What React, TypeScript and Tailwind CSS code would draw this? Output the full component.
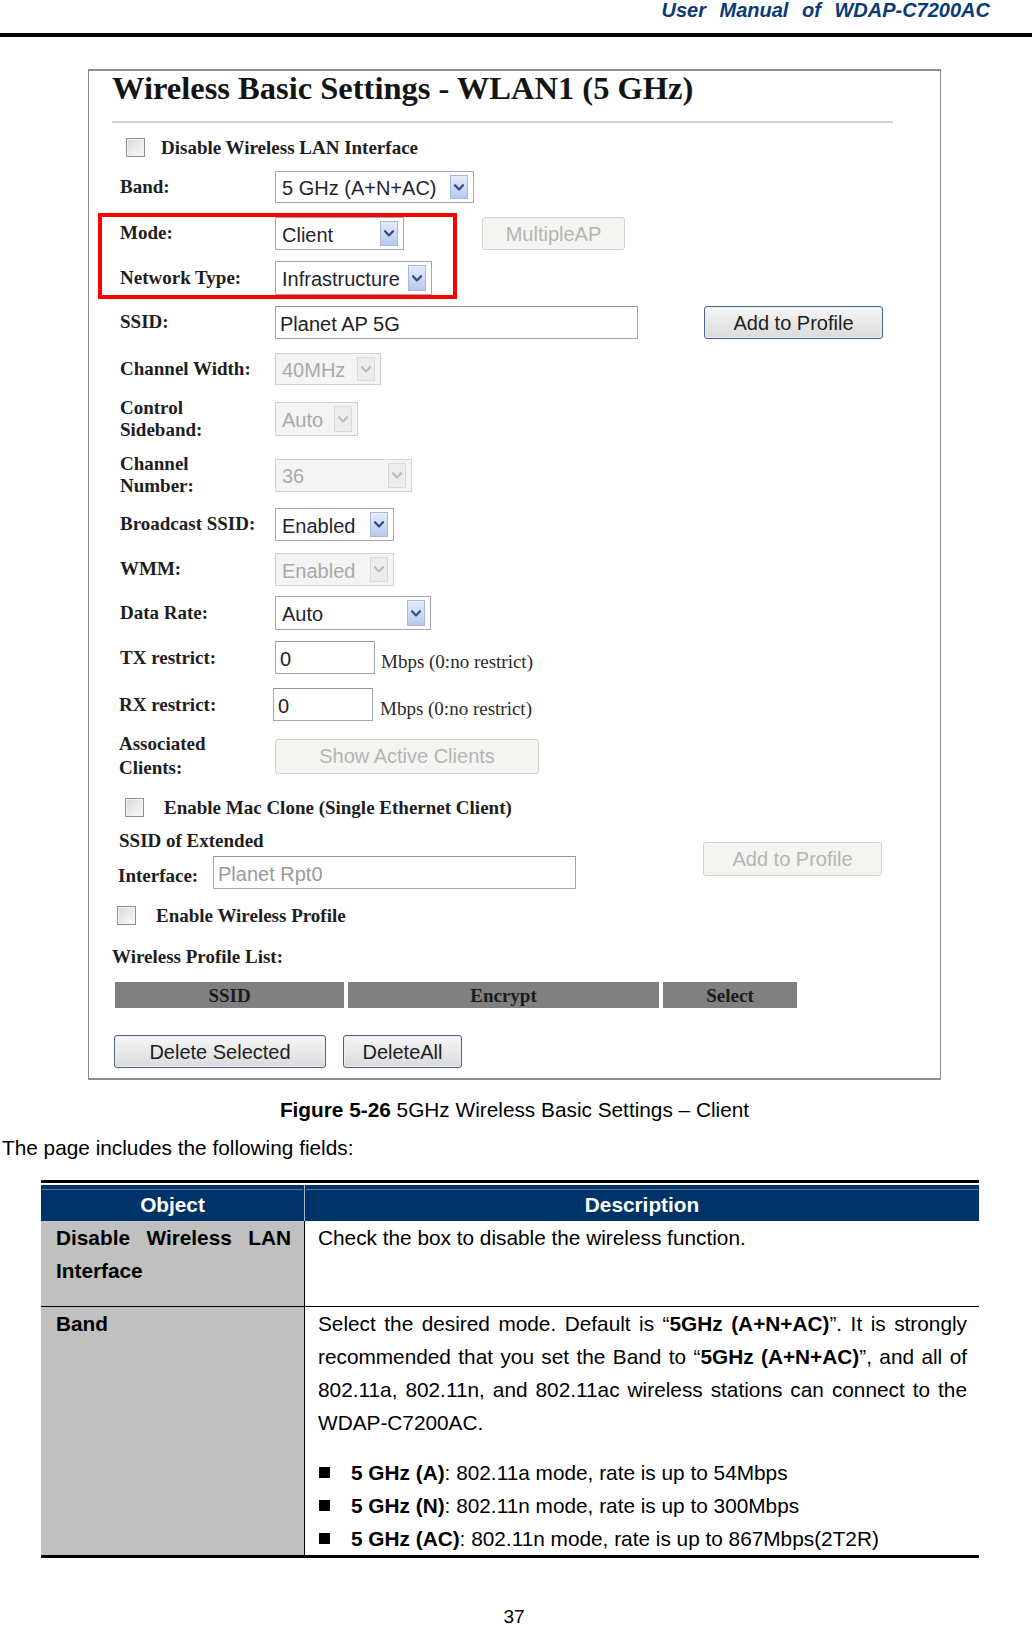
import React from "react";

const serif = "font-['Liberation_Serif','Times_New_Roman',serif]";
const sans = "font-['Liberation_Sans',Arial,sans-serif]";

function Chevron({ color }: { color: string }) {
  return (
    <svg width="10" height="7" viewBox="0 0 10 7">
      <path d="M1 1.2 L5 5.4 L9 1.2" fill="none" stroke={color} strokeWidth="2.2" strokeLinecap="round" strokeLinejoin="round" />
    </svg>
  );
}

function Sel({ className, text, disabled }: { className: string; text: string; disabled?: boolean }) {
  return (
    <div
      className={
        "flex items-stretch border " +
        (disabled ? "border-[#d2d2d2] bg-[#f4f4f4] " : "border-[#a3a9b1] bg-white ") +
        className
      }
    >
      <div
        className={
          "flex-1 flex items-center pl-[6px] pt-[2px] text-[20px] leading-none whitespace-nowrap overflow-hidden " +
          sans +
          (disabled ? " text-[#a9a9a9]" : " text-[#282331]")
        }
      >
        {text}
      </div>
      <div
        className={
          "my-[3px] mr-[5px] w-[18px] flex items-center justify-center border " +
          (disabled
            ? "border-[#dadada] bg-[#ececec]"
            : "border-[#a7b9de] bg-linear-to-b from-[#e4ecfb] to-[#b6c9ee]")
        }
      >
        <Chevron color={disabled ? "#bdbdbd" : "#2f4a86"} />
      </div>
    </div>
  );
}

function Inp({ className, text, dim }: { className: string; text: string; dim?: boolean }) {
  return (
    <div
      className={
        "flex items-center border border-[#9ea6b0] border-t-[#8d96a2] bg-white pl-[4px] pt-[2px] text-[20px] leading-none whitespace-nowrap " +
        sans +
        (dim ? " text-[#9b9b9b]" : " text-[#222]") +
        " " +
        className
      }
    >
      {text}
    </div>
  );
}

function Btn({ className, text, disabled }: { className: string; text: string; disabled?: boolean }) {
  return (
    <div
      className={
        "flex items-center justify-center rounded-[3px] border text-[20px] leading-none whitespace-nowrap " +
        sans +
        (disabled
          ? " border-[#d2d2cd] bg-[#f4f4f1] text-[#b4b4b4]"
          : " border-[#4a6282] bg-linear-to-b from-[#f7f7f7] to-[#dadada] text-[#1e1e1e] shadow-[inset_0_0_0_1px_#e6eefa]") +
        " " +
        className
      }
    >
      {text}
    </div>
  );
}

function Check() {
  return (
    <div className="w-[19px] h-[19px] border border-[#8e8f8f] bg-linear-to-br from-[#d5d9de] to-[#fafafa] shadow-[inset_0_0_0_1px_#f2f2f2]" />
  );
}

function Label({ children, className }: { children: React.ReactNode; className?: string }) {
  return (
    <div className={"ml-[8px] w-[155px] shrink-0 text-[19px] font-bold text-[#1e1e1e] " + serif + " " + (className ?? "")}>
      {children}
    </div>
  );
}

function Panel() {
  return (
    <div className="relative ml-[88px] mt-[32px] w-[853px] h-[1011px] border-x border-y-2 border-[#8d8d8d] bg-white">
      <div className="pl-[23px]">
        <div className={"h-[34px] leading-[34px] text-[32.5px] font-bold text-[#141414] whitespace-nowrap " + serif}>
          Wireless Basic Settings - WLAN1 (5 GHz)
        </div>
        <div className="mt-[16px] h-[2px] w-[781px] bg-[#d2d2d2]" />

        {/* Disable wireless */}
        <div className="mt-[8px] h-[32px] flex items-center">
          <div className="ml-[14px]">
            <Check />
          </div>
          <div className={"ml-[16px] pt-[2px] text-[19px] font-bold text-[#1e1e1e] " + serif}>Disable Wireless LAN Interface</div>
        </div>

        {/* Band */}
        <div className="mt-[8px] h-[32px] flex items-center">
          <Label>Band:</Label>
          <Sel className="w-[199px] h-[32px]" text="5 GHz (A+N+AC)" />
        </div>

        {/* Mode */}
        <div className="mt-[14px] h-[33px] flex items-center">
          <Label>Mode:</Label>
          <Sel className="w-[129px] h-[33px]" text="Client" />
          <Btn className="ml-[78px] w-[143px] h-[33px]" text="MultipleAP" disabled />
        </div>

        {/* Network type */}
        <div className="mt-[11px] h-[34px] flex items-center">
          <Label>Network Type:</Label>
          <Sel className="w-[157px] h-[34px]" text="Infrastructure" />
        </div>

        {/* SSID */}
        <div className="mt-[11px] h-[33px] flex items-center">
          <Label>SSID:</Label>
          <Inp className="w-[363px] h-[33px]" text="Planet AP 5G" />
          <Btn className="ml-[66px] w-[179px] h-[33px]" text="Add to Profile" />
        </div>

        {/* Channel width */}
        <div className="mt-[14px] h-[32px] flex items-center">
          <Label>Channel Width:</Label>
          <Sel className="w-[106px] h-[32px]" text="40MHz" disabled />
        </div>

        {/* Control sideband */}
        <div className="mt-[12px] h-[44px] flex items-center">
          <Label className="leading-[22px]">
            Control
            <br />
            Sideband:
          </Label>
          <Sel className="w-[83px] h-[34px]" text="Auto" disabled />
        </div>

        {/* Channel number */}
        <div className="mt-[12px] h-[44px] flex items-center">
          <Label className="leading-[22px]">
            Channel
            <br />
            Number:
          </Label>
          <Sel className="w-[137px] h-[33px]" text="36" disabled />
        </div>

        {/* Broadcast */}
        <div className="mt-[11px] h-[33px] flex items-center">
          <Label>Broadcast SSID:</Label>
          <Sel className="w-[119px] h-[33px]" text="Enabled" />
        </div>

        {/* WMM */}
        <div className="mt-[12px] h-[33px] flex items-center">
          <Label>WMM:</Label>
          <Sel className="w-[119px] h-[33px]" text="Enabled" disabled />
        </div>

        {/* Data rate */}
        <div className="mt-[10px] h-[34px] flex items-center">
          <Label>Data Rate:</Label>
          <Sel className="w-[156px] h-[34px]" text="Auto" />
        </div>

        {/* TX */}
        <div className="mt-[11px] h-[33px] flex items-center">
          <Label className="pt-[2px]">TX restrict:</Label>
          <Inp className="w-[100px] h-[33px]" text="0" />
          <div className={"ml-[6px] mt-[10px] text-[19px] text-[#2a2a2a] " + serif}>Mbps (0:no restrict)</div>
        </div>

        {/* RX */}
        <div className="mt-[14px] h-[33px] flex items-center">
          <div className={"ml-[7px] pt-[2px] w-[154px] shrink-0 text-[19px] font-bold text-[#1e1e1e] " + serif}>RX restrict:</div>
          <Inp className="w-[100px] h-[33px]" text="0" />
          <div className={"ml-[7px] mt-[10px] text-[19px] text-[#2a2a2a] " + serif}>Mbps (0:no restrict)</div>
        </div>

        {/* Associated */}
        <div className="mt-[13px] h-[44px] flex items-center">
          <div className={"ml-[7px] w-[156px] shrink-0 text-[19px] leading-[24px] font-bold text-[#1e1e1e] " + serif}>
            Associated
            <br />
            Clients:
          </div>
          <Btn className="w-[264px] h-[35px]" text="Show Active Clients" disabled />
        </div>

        {/* Mac clone */}
        <div className="mt-[13px] h-[32px] flex items-center">
          <div className="ml-[13px]">
            <Check />
          </div>
          <div className={"ml-[20px] pt-[2px] text-[19px] font-bold text-[#1e1e1e] " + serif}>
            Enable Mac Clone (Single Ethernet Client)
          </div>
        </div>

        {/* SSID of extended interface */}
        <div className="mt-[7px] flex items-start">
          <div className="w-[464px] flex flex-col">
            <div className={"ml-[7px] h-[22px] leading-[22px] text-[19px] font-bold text-[#1e1e1e] " + serif}>
              SSID of Extended
            </div>
            <div className="mt-[4px] h-[33px] flex items-center">
              <div className={"ml-[6px] pt-[8px] w-[95px] shrink-0 text-[19px] font-bold text-[#1e1e1e] " + serif}>Interface:</div>
              <Inp className="w-[363px] h-[33px]" text="Planet Rpt0" dim />
            </div>
          </div>
          <Btn className="ml-[127px] mt-[12px] w-[179px] h-[34px]" text="Add to Profile" disabled />
        </div>

        {/* Enable wireless profile */}
        <div className="mt-[10px] h-[32px] flex items-center">
          <div className="ml-[5px]">
            <Check />
          </div>
          <div className={"ml-[20px] pt-[2px] text-[19px] font-bold text-[#1e1e1e] " + serif}>Enable Wireless Profile</div>
        </div>

        <div className={"mt-[15px] h-[22px] leading-[22px] text-[19px] font-bold text-[#1e1e1e] " + serif}>
          Wireless Profile List:
        </div>

        <div className={"mt-[14px] h-[26px] flex text-[19px] font-bold text-[#1c1c1c] " + serif}>
          <div className="ml-[3px] w-[229px] bg-[#808080] flex items-center justify-center pt-[2px]">SSID</div>
          <div className="ml-[4px] w-[311px] bg-[#808080] flex items-center justify-center pt-[2px]">Encrypt</div>
          <div className="ml-[4px] w-[134px] bg-[#808080] flex items-center justify-center pt-[2px]">Select</div>
        </div>

        <div className="mt-[27px] h-[33px] flex items-center">
          <Btn className="ml-[2px] w-[212px] h-[33px]" text="Delete Selected" />
          <Btn className="ml-[17px] w-[119px] h-[33px]" text="DeleteAll" />
        </div>
      </div>

      {/* red annotation box */}
      <div className="absolute left-[9px] top-[142px] w-[359px] h-[86px] border-[4px] border-[#ff0000]" />
    </div>
  );
}

function J({ children }: { children: React.ReactNode }) {
  return <div className="whitespace-nowrap text-justify [text-align-last:justify]">{children}</div>;
}

function Bullet({ children }: { children: React.ReactNode }) {
  return (
    <div className="flex items-center h-[33px]">
      <div className="ml-[1px] w-[11px] h-[11px] bg-black" />
      <div className="ml-[21px] whitespace-nowrap">{children}</div>
    </div>
  );
}

export default function App() {
  return (
    <div className={"w-[1032px] h-[1627px] overflow-hidden bg-white text-black " + sans}>
      <div className="h-[33px] flex justify-end pr-[42px]">
        <div className="text-[20px] leading-[20px] font-bold italic text-[#0b3a76] [word-spacing:8px] whitespace-nowrap">
          User Manual of WDAP-C7200AC
        </div>
      </div>
      <div className="h-[4px] bg-black" />

      <Panel />

      <div className="mt-[17px] h-[26px] leading-[26px] text-[20.8px] text-center pr-[3px] whitespace-nowrap">
        <b>Figure 5-26</b> 5GHz Wireless Basic Settings – Client
      </div>
      <div className="mt-[12px] h-[26px] leading-[26px] text-[20.8px] pl-[2px] whitespace-nowrap">
        The page includes the following fields:
      </div>

      <div className="ml-[41px] mt-[19px] w-[938px] text-[20.8px]">
        <div className="h-[3px] bg-black" />
        <div className="mt-[2px] h-[36px] flex">
          <div className="w-[263px] bg-[#003468] pt-[4px]">
            <div className="mx-[1px] border-t border-[#58779f] h-[31px] flex items-center justify-center text-white font-bold">
              Object
            </div>
          </div>
          <div className="w-[1px] bg-[#a9b7cb]" />
          <div className="w-[674px] bg-[#003468] pt-[4px]">
            <div className="mx-[1px] border-t border-[#58779f] h-[31px] flex items-center justify-center text-white font-bold">
              Description
            </div>
          </div>
        </div>

        {/* Row 1 */}
        <div className="h-[85px] flex">
          <div className="w-[263px] bg-[#c0c0c0] pl-[15px] pr-[13px] leading-[33px] font-bold">
            <J>Disable Wireless LAN</J>
            <div>Interface</div>
          </div>
          <div className="w-[1px] bg-black" />
          <div className="w-[674px] pl-[13px] pr-[12px] leading-[33px]">Check the box to disable the wireless function.</div>
        </div>
        <div className="h-[1px] bg-black" />

        {/* Row 2 */}
        <div className="flex">
          <div className="w-[263px] bg-[#c0c0c0] pl-[15px] leading-[33px] font-bold">Band</div>
          <div className="w-[1px] bg-black" />
          <div className="w-[674px] pl-[13px] pr-[12px] leading-[33px]">
            <J>
              Select the desired mode. Default is “<b>5GHz (A+N+AC)</b>”. It is strongly
            </J>
            <J>
              recommended that you set the Band to “<b>5GHz (A+N+AC)</b>”, and all of
            </J>
            <J>802.11a, 802.11n, and 802.11ac wireless stations can connect to the</J>
            <div>WDAP-C7200AC.</div>
            <div className="mt-[17px]">
              <Bullet>
                <b>5 GHz (A)</b>: 802.11a mode, rate is up to 54Mbps
              </Bullet>
              <Bullet>
                <b>5 GHz (N)</b>: 802.11n mode, rate is up to 300Mbps
              </Bullet>
              <Bullet>
                <b>5 GHz (AC)</b>: 802.11n mode, rate is up to 867Mbps(2T2R)
              </Bullet>
            </div>
          </div>
        </div>
        <div className="h-[3px] bg-black" />
      </div>

      <div className="mt-[48px] h-[22px] leading-[22px] text-[19px] text-center pr-[4px]">37</div>
    </div>
  );
}
